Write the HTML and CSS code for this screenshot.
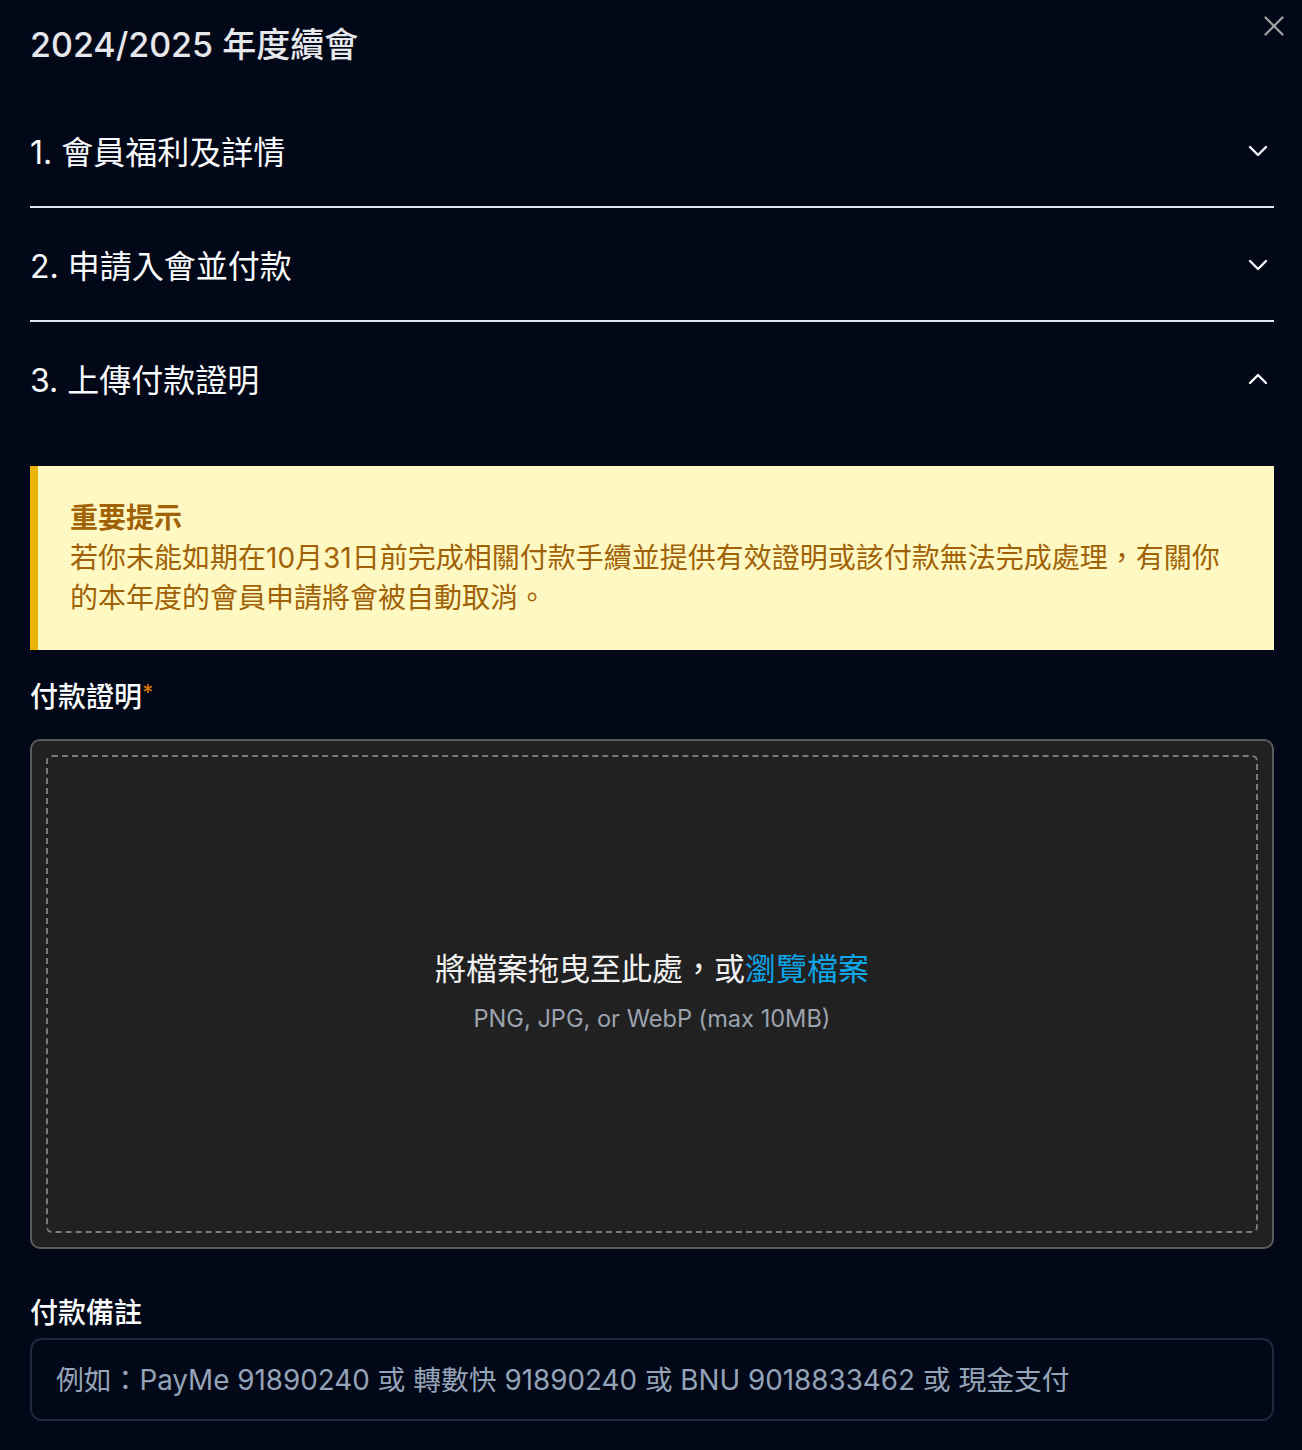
FILE: index.html
```html
<!DOCTYPE html>
<html lang="zh-Hant">
<head>
  <meta charset="UTF-8">
  <meta name="viewport" content="width=device-width, initial-scale=1.0">
  <title>2024/2025 年度續會</title>
  <link rel="stylesheet" href="styles.css">
</head>
<body>

  <div class="dialog">
    <button class="close-btn" aria-label="關閉">
      <svg width="34" height="34" viewBox="0 0 24 24" fill="none" stroke="currentColor" stroke-width="1.6" stroke-linecap="round" stroke-linejoin="round"><path d="M18 6 6 18"/><path d="m6 6 12 12"/></svg>
    </button>

    <h1 class="dialog-title">2024/2025 年度續會</h1>

    <!-- Steps -->
    <div class="accordion">
      <div class="acc-item">
        <button class="acc-header">
          <span>1. 會員福利及詳情</span>
          <svg width="32" height="32" viewBox="0 0 24 24" fill="none" stroke="currentColor" stroke-width="1.8" stroke-linecap="round" stroke-linejoin="round"><path d="m6 9 6 6 6-6"/></svg>
        </button>
      </div>

      <div class="acc-item">
        <button class="acc-header">
          <span>2. 申請入會並付款</span>
          <svg width="32" height="32" viewBox="0 0 24 24" fill="none" stroke="currentColor" stroke-width="1.8" stroke-linecap="round" stroke-linejoin="round"><path d="m6 9 6 6 6-6"/></svg>
        </button>
      </div>

      <div class="acc-item open">
        <button class="acc-header">
          <span>3. 上傳付款證明</span>
          <svg width="32" height="32" viewBox="0 0 24 24" fill="none" stroke="currentColor" stroke-width="1.8" stroke-linecap="round" stroke-linejoin="round"><path d="m18 15-6-6-6 6"/></svg>
        </button>

        <div class="acc-body">
          <div class="notice">
            <div class="notice-title">重要提示</div>
            <p>若你未能如期在10月31日前完成相關付款手續並提供有效證明或該付款無法完成處理，有關你的本年度的會員申請將會被自動取消。</p>
          </div>

          <label class="field-label">付款證明<span class="required">*</span></label>
          <div class="dropzone">
            <div class="dropzone-inner">
              <div class="drop-text">將檔案拖曳至此處，或<a href="#" class="browse-link">瀏覽檔案</a></div>
              <div class="drop-hint">PNG, JPG, or WebP (max 10MB)</div>
            </div>
          </div>

          <label class="field-label notes-label" for="paymentNotes">付款備註</label>
          <input id="paymentNotes" class="text-input" type="text" placeholder="例如：PayMe 91890240 或 轉數快 91890240 或 BNU 9018833462 或 現金支付">
        </div>
      </div>
    </div>
  </div>

</body>
</html>
```

FILE: styles.css
```css
body {
  margin: 0;
  background-color: #020817;
  color: #f1f5f9;
  font-family: Inter, "Noto Sans CJK TC", sans-serif;
}
.dialog {
  position: relative;
  padding: 23px 28px 40px 30px;
}
.close-btn {
  position: absolute;
  top: 9px;
  right: 11px;
  padding: 0;
  border: none;
  background: none;
  color: #a3a3a3;
  display: flex;
}
.dialog-title {
  margin: 0 0 27px 0;
  font-size: 34px;
  line-height: 44px;
  font-weight: 500;
  color: #e5e7eb;
}
.acc-item {
  border-bottom: 2px solid #e2e8f0;
}
.acc-item.open {
  border-bottom: none;
}
.acc-header {
  width: 100%;
  height: 112px;
  padding: 0;
  border: none;
  background: none;
  color: #f8fafc;
  font-family: inherit;
  font-size: 32px;
  font-weight: 400;
  display: flex;
  align-items: center;
  justify-content: space-between;
  text-align: left;
}
.acc-header svg {
  margin-top: 2px;
}
.acc-body {
  padding-top: 32px;
}
/* Warning box */
.notice {
  background-color: #fef9c3;
  border-left: 8px solid #eab308;
  padding: 32px;
  color: #a16207;
  font-size: 28px;
  line-height: 40px;
}
.notice-title {
  font-weight: 700;
}
.notice p {
  margin: 0;
}
.field-label {
  display: block;
  margin-top: 27px;
  font-size: 28px;
  line-height: 40px;
  font-weight: 500;
  color: #f8fafc;
}
.required {
  color: #d97706;
  font-size: 22px;
  vertical-align: top;
  line-height: 30px;
}
.dropzone {
  margin-top: 22px;
  height: 510px;
  box-sizing: border-box;
  border: 2px solid #5c5c5c;
  border-radius: 10px;
  background-color: #212121;
  padding: 14px;
}
.dropzone-inner {
  height: 100%;
  box-sizing: border-box;
  border: 2px dashed #7a7a7a;
  border-radius: 6px;
  display: flex;
  flex-direction: column;
  align-items: center;
  justify-content: center;
  padding-bottom: 6px;
}
.drop-text {
  font-size: 31px;
  line-height: 44px;
  color: #f1f1f1;
}
.browse-link {
  color: #0ea5e9;
  text-decoration: none;
}
.drop-hint {
  margin-top: 12px;
  font-size: 23.6px;
  line-height: 32px;
  color: #9ca3af;
}
.notes-label {
  margin-top: 44px;
}
.text-input {
  display: block;
  width: 100%;
  box-sizing: border-box;
  height: 83px;
  margin-top: 5px;
  padding: 0 24px;
  border: 2px solid #1e293b;
  border-radius: 12px;
  background: transparent;
  color: #f8fafc;
  font-family: inherit;
  font-size: 27.8px;
}
.text-input::placeholder {
  color: #94a3b8;
}
```
